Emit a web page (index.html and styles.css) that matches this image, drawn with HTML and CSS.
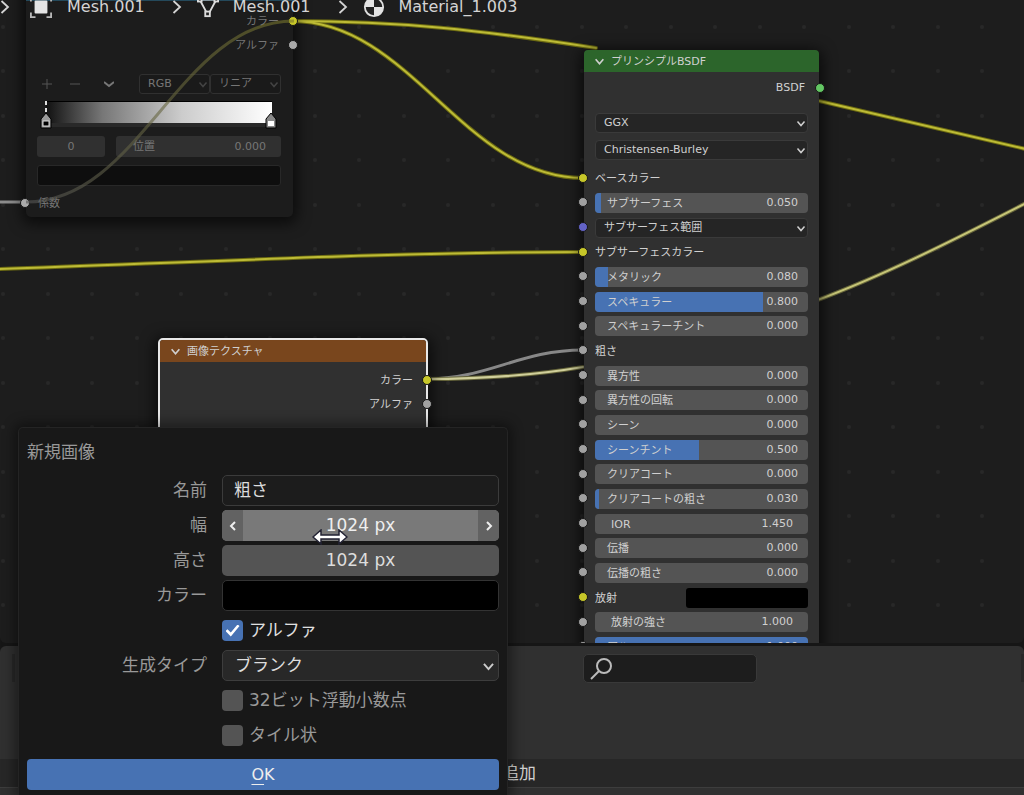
FILE: index.html
```html
<!DOCTYPE html>
<html lang="ja">
<head>
<meta charset="utf-8">
<title>シェーダーエディター</title>
<link rel="stylesheet" href="styles.css">
</head>
<body>
<svg class="defs" aria-hidden="true">
  <symbol id="chev" viewBox="0 0 10 10"><path d="M1.500 3L5 7L8.500 3" fill="none" stroke="currentColor" stroke-width="1.500"/></symbol>
  <symbol id="crumb" viewBox="0 0 10 14"><path d="M1.500 1L8 7L1.500 13" fill="none" stroke="currentColor" stroke-width="1.800"/></symbol>
</svg>
<div class="app">
  <main class="editor">
    <svg class="wires" aria-hidden="true">
      <defs>
        <pattern id="dots" width="89" height="89" patternUnits="userSpaceOnUse">
          <g fill="#282828"><circle cx="3" cy="27" r="2"/><circle cx="48" cy="27" r="2"/><circle cx="3" cy="71" r="2"/><circle cx="48" cy="71" r="2"/></g>
        </pattern>
      </defs>
      <rect width="100%" height="100%" fill="url(#dots)"/>
      <g fill="none" stroke-linecap="round">
        <g stroke="#6c6a12" stroke-width="4">
          <path d="M292 21C400 21 480 30 596 48"/><path d="M292 21C410 21 464 178 583 178"/>
          <path d="M0 269C200 262 400 252 583 252"/><path d="M815 100L1030 150"/>
        </g>
        <g stroke="#bdbb36" stroke-width="2">
          <path d="M292 21C400 21 480 30 596 48"/><path d="M292 21C410 21 464 178 583 178"/>
          <path d="M0 269C200 262 400 252 583 252"/><path d="M815 100L1030 150"/>
        </g>
        <path d="M0 202H25" stroke="#8c8c8c" stroke-width="3"/>
        <path d="M426 379C488 379 520 350 583 350" stroke="#888" stroke-width="3"/>
        <g stroke="#65643a" stroke-width="4"><path d="M426 379C480 379 530 376 583 367"/><path d="M815 301C880 277 950 242 1030 201"/></g>
        <g stroke="#d0cf9a" stroke-width="2"><path d="M426 379C480 379 530 376 583 367"/><path d="M815 301C880 277 950 242 1030 201" stroke="#c6c577"/></g>
      </g>
    </svg>

    <section class="node ramp">
      <header class="title"></header>
      <div class="row out"><span>カラー</span><i class="socket yellow"></i></div>
      <div class="row out"><span>アルファ</span><i class="socket"></i></div>
      <div class="tools">
        <button class="flat" aria-label="追加"><svg viewBox="0 0 10 10"><path d="M0 5H10M5 0V10"/></svg></button>
        <button class="flat" aria-label="削除"><svg viewBox="0 0 10 10"><path d="M0 5H10"/></svg></button>
        <button class="flat bold" aria-label="メニュー"><svg viewBox="0 0 10 10"><path d="M0 3L5 7L10 3"/></svg></button>
        <div class="modes">
          <div class="drop"><select aria-label="カラーモード"><option>RGB</option></select><svg><use href="#chev"/></svg></div>
          <div class="drop"><select aria-label="補間"><option>リニア</option></select><svg><use href="#chev"/></svg></div>
        </div>
      </div>
      <div class="band">
        <svg class="stop first" viewBox="0 0 12 28"><path d="M6 0V14" stroke="#ddd" stroke-width="2" stroke-dasharray="4 3"/><path d="M1 27V18L6 12L11 18V27Z" fill="#999" stroke="#000"/><rect x="3" y="20" width="6" height="5" fill="#000" stroke="#ddd"/></svg>
        <svg class="stop last" viewBox="0 0 12 28"><path d="M1 27V18L6 12L11 18V27Z" fill="#888" stroke="#000"/><rect x="3" y="20" width="6" height="5" fill="#fff"/></svg>
      </div>
      <div class="pair">
        <input class="index" aria-label="番号" value="0">
        <div class="slider"><label for="pos">位置</label><input id="pos" value="0.000"></div>
      </div>
      <button class="swatch" aria-label="カラー"></button>
      <div class="row in"><i class="socket"></i><span>係数</span></div>
      <svg class="through" viewBox="0 0 268 182" aria-hidden="true"><defs><linearGradient id="fade"><stop stop-color="#555"/><stop offset="1" stop-color="#77752a"/></linearGradient></defs><path d="M0 181C115 181 153 0 268 0" fill="none" stroke="url(#fade)" stroke-width="3" opacity=".6"/></svg>
    </section>

    <section class="node bsdf">
      <header class="title"><svg><use href="#chev"/></svg><span>プリンシプルBSDF</span></header>
      <div class="row out"><span>BSDF</span><i class="socket green"></i></div>
      <div class="choices">
        <div class="drop"><select aria-label="分布"><option>GGX</option></select><svg><use href="#chev"/></svg></div>
        <div class="drop"><select aria-label="サブサーフェス方式"><option>Christensen-Burley</option></select><svg><use href="#chev"/></svg></div>
      </div>
      <div class="sockets">
        <div class="row"><i class="socket yellow"></i><span>ベースカラー</span></div>
        <div class="row"><i class="socket"></i><div class="slider"><b style="width:3%"></b><label for="s1">サブサーフェス</label><input id="s1" value="0.050"></div></div>
        <div class="row"><i class="socket violet"></i><div class="drop"><select aria-label="サブサーフェス範囲"><option>サブサーフェス範囲</option></select><svg><use href="#chev"/></svg></div></div>
        <div class="row"><i class="socket yellow"></i><span>サブサーフェスカラー</span></div>
        <div class="row"><i class="socket"></i><div class="slider"><b style="width:6%"></b><label for="s2">メタリック</label><input id="s2" value="0.080"></div></div>
        <div class="row"><i class="socket"></i><div class="slider"><b style="width:79%"></b><label for="s3">スペキュラー</label><input id="s3" value="0.800"></div></div>
        <div class="row"><i class="socket"></i><div class="slider"><label for="s4">スペキュラーチント</label><input id="s4" value="0.000"></div></div>
        <div class="row"><i class="socket"></i><span>粗さ</span></div>
        <div class="row"><i class="socket"></i><div class="slider"><label for="s5">異方性</label><input id="s5" value="0.000"></div></div>
        <div class="row"><i class="socket"></i><div class="slider"><label for="s6">異方性の回転</label><input id="s6" value="0.000"></div></div>
        <div class="row"><i class="socket"></i><div class="slider"><label for="s7">シーン</label><input id="s7" value="0.000"></div></div>
        <div class="row"><i class="socket"></i><div class="slider"><b style="width:49%"></b><label for="s8">シーンチント</label><input id="s8" value="0.500"></div></div>
        <div class="row"><i class="socket"></i><div class="slider"><label for="s9">クリアコート</label><input id="s9" value="0.000"></div></div>
        <div class="row"><i class="socket"></i><div class="slider"><b style="width:2%"></b><label for="s10">クリアコートの粗さ</label><input id="s10" value="0.030"></div></div>
        <div class="row"><i class="socket"></i><div class="slider number"><label for="s11">IOR</label><input id="s11" value="1.450"></div></div>
        <div class="row"><i class="socket"></i><div class="slider"><label for="s12">伝播</label><input id="s12" value="0.000"></div></div>
        <div class="row"><i class="socket"></i><div class="slider"><label for="s13">伝播の粗さ</label><input id="s13" value="0.000"></div></div>
        <div class="row split"><i class="socket yellow"></i><span>放射</span><button class="swatch" aria-label="放射"></button></div>
        <div class="row"><i class="socket"></i><div class="slider number"><label for="s14">放射の強さ</label><input id="s14" value="1.000"></div></div>
        <div class="row"><i class="socket"></i><div class="slider"><b style="width:100%"></b><label for="s15">アルファ</label><input id="s15" value="1.000"></div></div>
      </div>
    </section>

    <section class="node image">
      <header class="title"><svg><use href="#chev"/></svg><span>画像テクスチャ</span></header>
      <div class="row out"><span>カラー</span><i class="socket yellow"></i></div>
      <div class="row out"><span>アルファ</span><i class="socket"></i></div>
    </section>

    <nav class="crumbs">
      <svg class="sep"><use href="#crumb"/></svg>
      <svg class="icon object" viewBox="0 0 24 24"><rect x="5" y="5" width="14" height="14" rx="1" fill="#e4e4e4"/><path d="M1 6V1H6M18 1H23V6M23 18V23H18M6 23H1V18" fill="none" stroke="#b8b8b8" stroke-width="2"/></svg>
      <span>Mesh.001</span>
      <svg class="sep"><use href="#crumb"/></svg>
      <svg class="icon" viewBox="0 0 24 24"><path d="M3 4H21M4 6L11 19M20 6L13 19" fill="none" stroke="#ddd" stroke-width="2"/><g fill="#222" stroke="#ddd" stroke-width="2"><rect x="1" y="2" width="4" height="4"/><rect x="19" y="2" width="4" height="4"/><rect x="9" y="17" width="5" height="5"/></g></svg>
      <span>Mesh.001</span>
      <svg class="sep"><use href="#crumb"/></svg>
      <svg class="icon" viewBox="0 0 24 24"><circle cx="12" cy="12" r="10" fill="#222" stroke="#e0e0e0" stroke-width="2"/><path d="M12 2V12H2A10 10 0 0 1 12 2ZM12 12H22A10 10 0 0 1 12 22Z" fill="#e4e4e4"/></svg>
      <span>Material_1.003</span>
    </nav>
  </main>

  <footer class="browser">
    <div class="bar">
      <span class="edge"></span>
      <div class="search"><svg viewBox="0 0 24 24"><circle cx="15" cy="9" r="7"/><path d="M10 14L2 22"/></svg><input type="search" aria-label="検索"></div>
      <span class="edge last"></span>
    </div>
    <div class="menu"><button>追加</button></div>
  </footer>
</div>

<form class="dialog">
  <h1>新規画像</h1>
  <div class="fields">
    <label for="name">名前</label><input id="name" class="text" value="粗さ">
    <label for="w">幅</label>
    <div class="stepper">
      <button type="button" aria-label="減らす"><svg viewBox="0 0 8 12"><path d="M6 2L2 6L6 10"/></svg></button>
      <input id="w" value="1024 px">
      <button type="button" aria-label="増やす"><svg viewBox="0 0 8 12"><path d="M2 2L6 6L2 10"/></svg></button>
      <svg class="cursor" viewBox="0 0 36 16"><path d="M1 8L9 1V6H27V1L35 8L27 15V10H9V15Z" fill="#fff" stroke="#223" stroke-width="1.500"/></svg>
    </div>
    <label for="h">高さ</label><input id="h" class="num" value="1024 px">
    <label for="col">カラー</label><button type="button" id="col" class="color"></button>
    <label class="check on"><input type="checkbox" checked>アルファ</label>
    <label for="gen">生成タイプ</label>
    <div class="drop"><select id="gen"><option>ブランク</option></select><svg><use href="#chev"/></svg></div>
    <label class="check"><input type="checkbox">32ビット浮動小数点</label>
    <label class="check"><input type="checkbox">タイル状</label>
  </div>
  <button type="button" class="ok"><u>O</u>K</button>
</form>
</body>
</html>
```

FILE: styles.css
```css
* { box-sizing: border-box; }
body {
  margin: 0;
  background: #161616;
  color: #d0d0d0;
  font: 11px/20px "DejaVu Sans", "Noto Sans CJK JP", sans-serif;
  overflow: hidden;
}
input, select, button { font: inherit; color: inherit; margin: 0; border: 0; padding: 0; background: none; appearance: none; outline: 0; min-width: 0; }
svg { display: block; flex: none; }
.defs { position: absolute; width: 0; height: 0; }
.app { display: flex; flex-direction: column; height: 100vh; }

/* node canvas */
.editor { position: relative; flex: 1; overflow: hidden; background: #1d1d1d; border-radius: 0 0 6px 6px; }
.wires { position: absolute; inset: 0; width: 100%; height: 100%; }
.node { position: absolute; background: #303030; border-radius: 5px; box-shadow: 0 3px 14px 4px #0009; }
.title { display: flex; align-items: center; gap: 6px; height: 22px; padding-left: 10px; border-radius: 4px 4px 0 0; }
.title svg { width: 11px; height: 11px; }
.title span, .row > span { padding-top: 2px; }
.row { position: relative; display: flex; align-items: center; height: 24px; padding: 0 11px; }
.row.out { justify-content: flex-end; padding-right: 14px; }
.socket { position: absolute; left: -6px; top: 7px; width: 10px; height: 10px; border-radius: 50%; background: #a1a1a1; border: 1px solid #161616; }
.out .socket { left: auto; right: -6px; }
.yellow { background: #c7c729; }
.green { background: #63c763; }
.violet { background: #6363c7; }

.drop { position: relative; flex: 1; }
.drop select { display: block; width: 100%; height: 20px; padding: 0 20px 0 8px; background: #252525; border: 1px solid #3a3a3a; border-radius: 4px; line-height: 18px; }
.drop svg { position: absolute; right: 2px; top: 5px; width: 10px; height: 11px; pointer-events: none; }

.slider { position: relative; display: flex; justify-content: space-between; flex: 1; height: 20px; padding: 0 10px 0 12px; background: #545454; border-radius: 4px; overflow: hidden; }
.slider b { position: absolute; left: 0; top: 0; height: 100%; background: #4772b3; }
.slider label, .slider input { position: relative; }
.slider label { white-space: nowrap; line-height: 22px; }
.slider input { width: 50px; text-align: right; }
.slider.number { padding: 0 15px 0 16px; }
.swatch { height: 20px; border-radius: 3px; background: #000; }

.bsdf { left: 584px; top: 50px; width: 235px; padding-bottom: 8px; }
.bsdf .title { background: #2c652b; }
.bsdf .row.out { height: 32px; }
.bsdf .row.out span { padding-top: 0; }
.bsdf .row.out .socket { top: 11px; }
.choices { display: grid; gap: 7px; padding: 9px 11px 6px; }
.sockets { display: grid; grid-auto-rows: 24px 25px 25px; }
.bsdf .sockets .row { height: auto; }
.split { justify-content: space-between; }
.split .swatch { width: 122px; }

.image { left: 158px; top: 338px; width: 270px; height: 130px; border: 2px solid #e8e8e8; }
.image .title { background: #79461d; margin-bottom: 6px; border-radius: 3px 3px 0 0; }
.image .row.out { padding-right: 13px; }

.ramp { left: 26px; top: -21px; width: 267px; background: #1c1c1c; color: #767676; padding-bottom: 2px; }
.ramp .title { background: #24495b; margin-bottom: 8px; }
.ramp .row.out .socket { right: -5px; }
.ramp .socket:not(.yellow) { background: #aaa; }
.tools { display: flex; align-items: center; gap: 18px; height: 22px; margin-top: 16px; padding: 0 12px 0 16px; }
.flat { width: 10px; height: 10px; }
.flat svg { width: 10px; height: 10px; fill: none; stroke: #555; }
.flat + .flat.bold { margin-left: 6px; }
.bold svg { stroke: #777; stroke-width: 2; }
.modes { display: flex; flex: 1; margin-left: 7px; }
.ramp .drop select { background: #1a1a1a; border-color: #303030; border-radius: 3px; }
.ramp .drop svg { color: #444; }
.band { position: relative; height: 26px; margin: 6px 21px 0 20px; background: linear-gradient(90deg, #111, #777 25%, #ccc 60%, #fff); border: solid #000; border-width: 1px 0 0; border-bottom: 4px solid #292929; }
.stop { position: absolute; top: -1px; width: 12px; height: 28px; }
.first { left: -6px; }
.stop.last { right: -5px; }
.pair { display: flex; gap: 11px; margin: 9px 12px 8px 11px; }
.ramp .pair > * { height: 21px; background: #303030; border-radius: 3px; }
.index { width: 68px; text-align: center; }
.pair .slider { padding: 0 15px 0 17px; }
.ramp .swatch { display: block; width: 244px; height: 21px; margin: 0 12px 5px 11px; background: #0e0e0e; border: 1px solid #282828; }
.ramp .row.in { padding-left: 12px; }
.through { position: absolute; left: 0; top: 42px; width: 268px; height: 182px; overflow: visible; pointer-events: none; }

.crumbs { position: absolute; left: 0; top: -5px; display: flex; align-items: center; height: 24px; font-size: 16px; color: #d4d4d4; }
.sep { width: 10px; height: 14px; }
.crumbs .icon { width: 22px; height: 22px; margin: 0 14px 0 15px; }
.crumbs .object { margin: 0 15px 0 20px; }
.crumbs .sep:not(:first-child) { margin-left: 27px; }

/* lower editor */
.browser { height: 149px; margin-top: 3px; background: #303030; border-radius: 6px 6px 0 0; display: flex; flex-direction: column; font-size: 17px; }
.bar { display: flex; flex: 1; padding-top: 8px; }
.edge { width: 3px; height: 28px; margin-left: 12px; background: #282828; }
.edge.last { margin-left: auto; }
.search { display: flex; align-items: center; width: 174px; height: 29px; margin-left: 568px; padding: 0 5px; background: #1d1d1d; border: 1px solid #393939; border-radius: 5px; }
.search svg { width: 24px; height: 24px; fill: none; stroke: #bbb; stroke-width: 2; }
.search input { flex: 1; }
.menu { height: 29px; margin-bottom: 7px; padding-left: 502px; background: #272727; border-bottom: 1px solid #3d3d3d; }
.menu button { height: 28px; }

/* new image popup */
.dialog { position: absolute; left: 18px; bottom: 0; width: 490px; padding: 9px 8px 5px; background: #181818; border: 1px solid #242424; border-bottom: 0; border-radius: 5px 5px 0 0; box-shadow: 0 0 12px 4px #0006; color: #999; font-size: 17px; line-height: 31px; }
.dialog h1 { margin: 0 0 7px; font: inherit; }
.fields { display: grid; grid-template-columns: 180px 1fr; grid-auto-rows: 31px; gap: 4px 15px; }
.fields > label { text-align: right; }
.text, .num, .color, .stepper { width: 100%; border-radius: 5px; }
.fields .text { padding: 0 11px; background: #1c1c1c; border: 1px solid #3b3b3b; color: #ddd; }
.fields .num { background: #545454; color: #ddd; text-align: center; }
.color { background: #000; border: 1px solid #333; }
.stepper { position: relative; display: flex; background: #797979; color: #eee; }
.stepper > input { flex: 1; text-align: center; }
.stepper button { display: grid; place-items: center; width: 21px; background: #626262; border-radius: 5px 0 0 5px; }
.stepper input + button { border-radius: 0 5px 5px 0; }
.stepper button svg { width: 8px; height: 12px; fill: none; stroke: #eee; stroke-width: 2; }
.cursor { position: absolute; left: 90px; top: 19px; width: 36px; height: 16px; }
.fields .check { grid-column: 2; display: flex; align-items: center; gap: 6px; }
.fields .check.on { color: #e0e0e0; }
.check input { width: 21px; height: 21px; background: #545454; border-radius: 4px; }
.check input:checked { background: #4772b3; display: grid; place-items: center; }
.check input:checked::before { content: ""; width: 14px; height: 12px; background: #fff; clip-path: polygon(0 55%, 14% 40%, 38% 66%, 86% 0, 100% 12%, 38% 100%); }
.dialog .drop select { height: 31px; padding: 0 24px 0 12px; background: #282828; border-color: #3d3d3d; border-radius: 5px; color: #ddd; line-height: 29px; }
.dialog .drop svg { right: 4px; top: 10px; width: 13px; height: 13px; color: #ccc; }
.ok { display: block; width: 100%; height: 31px; margin-top: 8px; background: #4772b3; border-radius: 4px; color: #eee; font-size: 16px; }
.ok u { text-underline-offset: 4px; }
```
